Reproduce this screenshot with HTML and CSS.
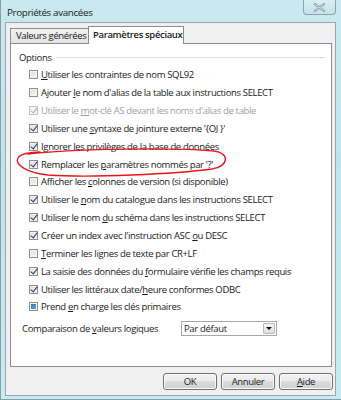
FILE: index.html
```html
<!DOCTYPE html>
<html lang="fr">
<head>
<meta charset="utf-8">
<link rel="stylesheet" href="styles.css">
</head>
<body>
<div class="window">
  <div class="titlebar">
    <span class="title">Propriétés avancées</span>
    <div class="close"><svg width="13" height="9" viewBox="0 0 13 9"><path d="M2 1 L11 8 M11 1 L2 8" stroke="#7b8a90" stroke-width="2.2" stroke-linecap="round"/><path d="M2 1 L11 8 M11 1 L2 8" stroke="#eef4f6" stroke-width="0.9" stroke-linecap="round"/></svg></div>
  </div>
  <div class="client">
    <div class="tabs">
      <div class="tab">Valeurs générées</div>
      <div class="tab active">Paramètres spéciaux</div>
    </div>
    <div class="panel">
      <div class="group-head"><span class="group-label">Options</span><span class="group-line"></span></div>
      <ul class="opts">
        <li><span class="cb"></span><span><u>U</u>tiliser les contraintes de nom SQL92</span></li>
        <li><span class="cb"></span><span>Ajouter <u>l</u>e nom d'alias de la table aux instructions SELECT</span></li>
        <li class="disabled"><span class="cb on"></span><span>Utiliser le <u>m</u>ot-clé AS devant les noms d'alias de table</span></li>
        <li><span class="cb on"></span><span>Utiliser une <u>s</u>yntaxe de jointure externe '{OJ }'</span></li>
        <li><span class="cb on"></span><span>I<u>g</u>norer les privilèges de la base de données</span></li>
        <li><span class="cb on"></span><span>Remplacer les <u>p</u>aramètres nommés par '?'</span></li>
        <li><span class="cb"></span><span>Afficher les <u>c</u>olonnes de version (si disponible)</span></li>
        <li><span class="cb on"></span><span>Utiliser le <u>n</u>om du catalogue dans les instructions SELECT</span></li>
        <li><span class="cb on"></span><span>Utiliser le nom <u>d</u>u schéma dans les instructions SELECT</span></li>
        <li><span class="cb on"></span><span>Créer un index avec l'instruction ASC <u>o</u>u DESC</span></li>
        <li><span class="cb"></span><span><u>T</u>erminer les lignes de texte par CR+LF</span></li>
        <li><span class="cb on"></span><span>La saisie des données du <u>f</u>ormulaire vérifie les champs requis</span></li>
        <li><span class="cb on"></span><span>Utiliser les littéraux date/<u>h</u>eure conformes ODBC</span></li>
        <li><span class="cb mixed"></span><span>Prend <u>e</u>n charge les clés primaires</span></li>
      </ul>
      <div class="compare">
        <span class="compare-label">Comparaison de <u>v</u>aleurs logiques</span>
        <div class="select"><span class="select-text">Par défaut</span><span class="select-btn"></span></div>
      </div>
      <svg class="scribble" width="341" height="400" viewBox="0 0 341 400"><path d="M28 154 C 70 149, 170 147, 214 151 C 230 153, 229 166, 212 169 C 175 174, 90 178, 48 175 C 28 173, 14 165, 18 158 C 20 154, 30 152, 40 152" fill="none" stroke="#e8161a" stroke-width="1.4" stroke-linecap="round"/></svg>
    </div>
    <div class="buttons">
      <div class="btn">OK</div>
      <div class="btn">Annuler</div>
      <div class="btn"><u>A</u>ide</div>
    </div>
  </div>
</div>
</body>
</html>
```

FILE: styles.css
```css
* { box-sizing: border-box; }
html, body { margin: 0; padding: 0; }
body { width: 341px; height: 400px; overflow: hidden; font-family: "Open Sans", "Noto Sans", sans-serif; font-size: 9.5px; letter-spacing: -0.35px; color: #1a1a1a; }
.window {
  position: relative;
  width: 341px; height: 400px;
  background: linear-gradient(180deg, #c9e9ef 0%, #bfe5ec 40%, #c6ebf1 100%);
  border-left: 1px solid #8c9da3;
  border-bottom: 1px solid #8c9da3;
  display: flex; flex-direction: column;
}
.titlebar { height: 22px; display: flex; align-items: flex-start; justify-content: space-between; }
.title { padding: 6px 0 0 6px; font-size: 9.8px; color: #1b1b1b; white-space: nowrap; }
.close {
  width: 33px; height: 15px; margin-right: 5px;
  border: 1px solid #8fa3aa; border-top: none; border-radius: 0 0 4px 4px;
  background: linear-gradient(180deg, #d9eef2, #c3e3ea);
  display: flex; align-items: center; justify-content: center;
}
.client {
  margin-left: 4px; width: 331px; height: 374px;
  background: #f0f0f0; border: 1px solid #9aa7ac;
  padding: 3px 2px 0 4px;
  display: flex; flex-direction: column;
}
.tabs { display: flex; align-items: flex-end; height: 17px; position: relative; z-index: 2; }
.tab {
  height: 15px; padding: 0 5px; border: 1px solid #898c95; border-bottom: none;
  background: linear-gradient(180deg, #f2f2f2, #e3e3e3);
  line-height: 14px; width: 79px; white-space: nowrap;
}
.tab.active {
  height: 18px; margin-bottom: -1px; width: 96px; margin-left: -1px;
  background: #fff; font-weight: 600; line-height: 16px; padding: 0 4px;
}
.panel {
  position: relative;
  width: 322px; height: 324px;
  background: #fff; border: 1px solid #898c95;
  padding: 6px 0 0 0;
}
.group-head { display: flex; align-items: center; height: 14px; padding-left: 8px; }
.group-label { padding-right: 4px; }
.group-line { flex: 0 0 269px; height: 1px; background: #d5dfe5; margin-top: 1px; }
.opts { list-style: none; margin: 2px 0 0 0; padding: 0 0 0 18px; }
.opts li { height: 17.85px; display: flex; align-items: center; white-space: nowrap; }
.opts li.disabled { color: #a0a0a0; }
.cb {
  position: relative;
  width: 9px; height: 9px; margin-right: 3px; flex: none;
  border: 1px solid #8e8f8f;
  background: linear-gradient(135deg, #dcdcdc, #f6f6f6);
  box-shadow: inset 0 0 0 1px #f4f4f4;
}
.cb.on::after {
  content: ""; position: absolute; left: 2px; top: -1px;
  width: 3px; height: 6px;
  border-right: 1.6px solid #2b3f7a; border-bottom: 1.6px solid #2b3f7a;
  transform: rotate(38deg);
}
.disabled .cb { border-color: #c4c4c4; background: #f4f4f4; }
.disabled .cb.on::after { border-color: #b5b5b5; }
.cb.mixed::after {
  content: ""; position: absolute; left: 1px; top: 1px; width: 5px; height: 5px;
  background: linear-gradient(135deg, #2f78b6, #5fa7d8);
}
u { text-decoration: underline; text-underline-offset: 1px; }
.compare { display: flex; align-items: center; height: 15px; margin-top: 5px; padding-left: 11px; }
.compare-label { width: 159px; white-space: nowrap; }
.select {
  width: 96px; height: 15px; border: 1px solid #a7a7a7; background: #fff;
  display: flex; align-items: center; justify-content: space-between; padding: 0 1px 0 2px;
}
.select-btn {
  position: relative;
  width: 12px; height: 11px; border: 1px solid #b9b9b9; border-radius: 1px;
  background: linear-gradient(180deg, #f5f5f5, #dddddd);
}
.select-btn::after {
  content: ""; position: absolute; left: 2px; top: 3px;
  border-left: 3px solid transparent; border-right: 3px solid transparent; border-top: 3px solid #111;
}
.scribble { position: absolute; left: -11px; top: -44px; pointer-events: none; }
.buttons { display: flex; justify-content: flex-end; gap: 4px; padding: 6px 0 0 0; }
.btn {
  width: 54px; height: 17px; border: 1px solid #707070; border-radius: 3px;
  background: linear-gradient(180deg, #f2f2f2 0%, #ebebeb 45%, #dddddd 50%, #cfcfcf 100%);
  box-shadow: inset 0 0 0 1px #fbfbfb;
  display: flex; align-items: center; justify-content: center;
}
```
